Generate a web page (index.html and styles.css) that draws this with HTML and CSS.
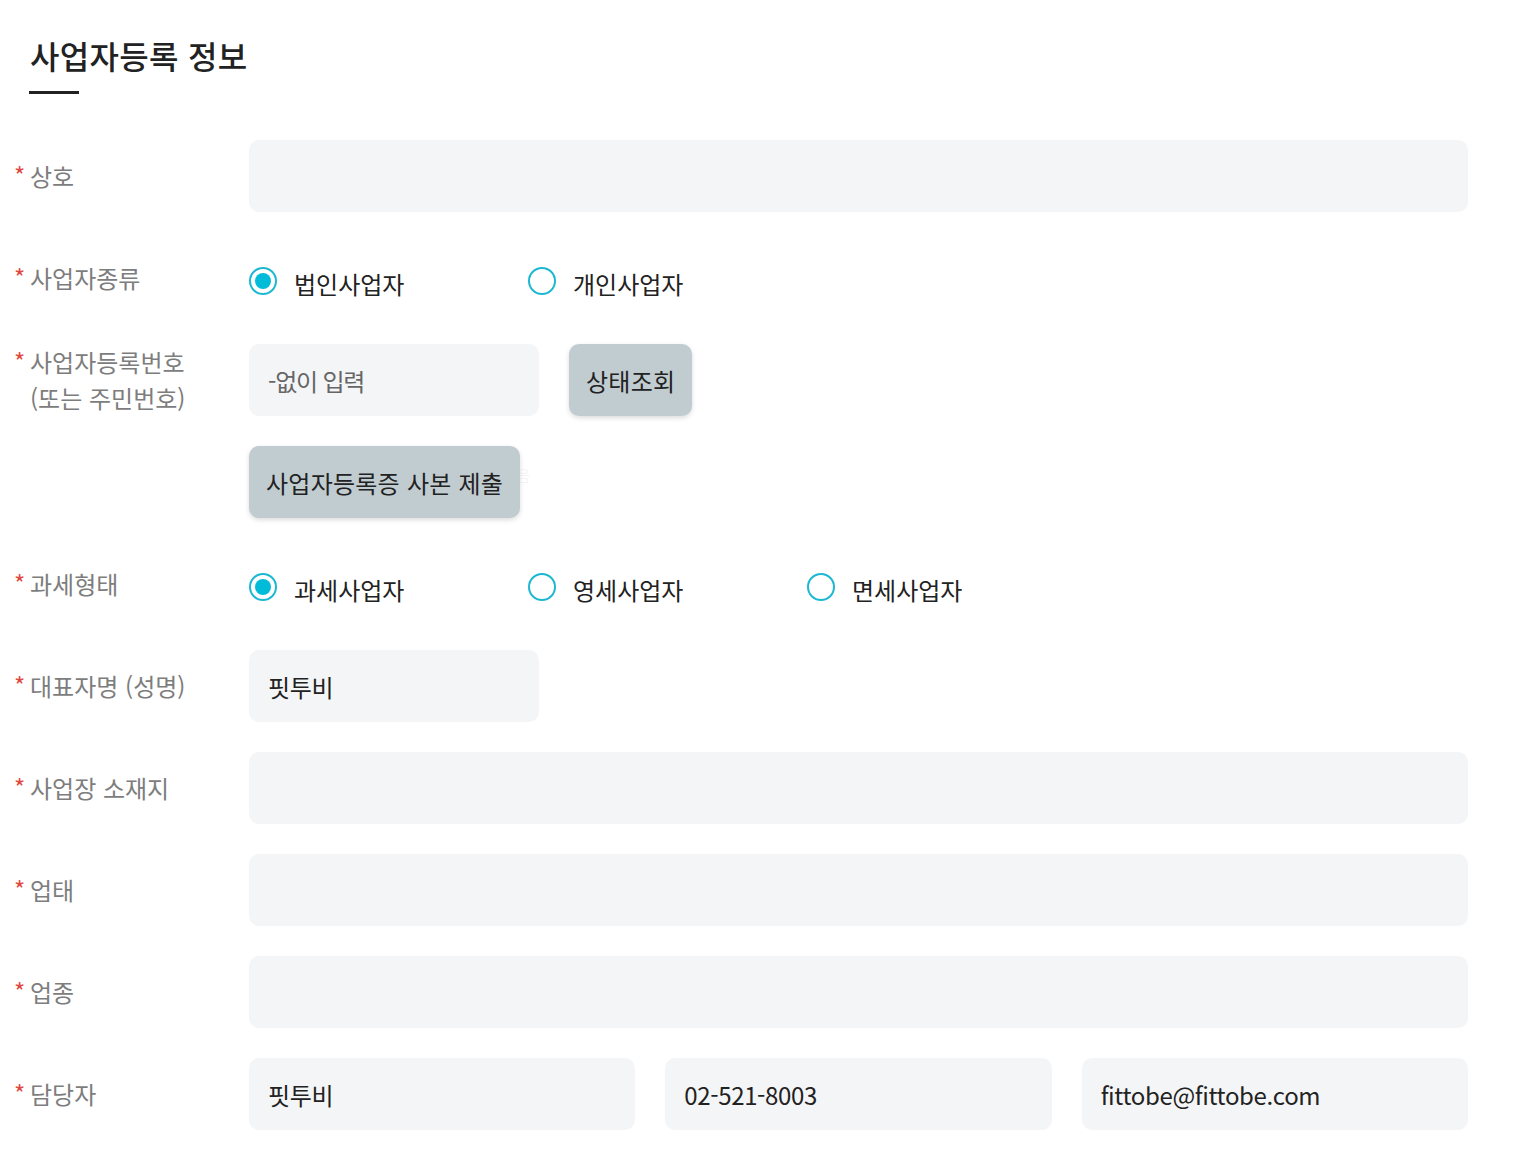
FILE: index.html
```html
<!DOCTYPE html>
<html lang="ko">
<head>
<meta charset="utf-8">
<title>사업자등록 정보</title>
<link rel="stylesheet" href="styles.css">
</head>
<body>
<div class="page">
  <div class="title-wrap">
    <h2 class="title">사업자등록 정보</h2>
    <div class="title-bar"></div>
  </div>

  <div class="form">
    <div class="row">
      <div class="label"><div class="label-inner"><span class="req">*</span><span class="label-text">상호</span></div></div>
      <div class="field"><div class="input full"></div></div>
    </div>

    <div class="row">
      <div class="label"><div class="label-inner"><span class="req">*</span><span class="label-text">사업자종류</span></div></div>
      <div class="field">
        <div class="radios">
          <label class="radio"><span class="dot checked"></span><span class="radio-text">법인사업자</span></label>
          <label class="radio"><span class="dot"></span><span class="radio-text">개인사업자</span></label>
        </div>
      </div>
    </div>

    <div class="row">
      <div class="label"><div class="label-inner"><span class="req">*</span><span class="label-text">사업자등록번호<br>(또는 주민번호)</span></div></div>
      <div class="field stack">
        <div class="inline">
          <div class="input short placeholder">-없이 입력</div>
          <button class="btn">상태조회</button>
        </div>
        <div class="file-wrap">
          <div class="file-ghost"><span class="ghost-btn">파일 선택</span><span class="ghost-text">선택된 파일 없음</span></div>
          <button class="btn">사업자등록증 사본 제출</button>
        </div>
      </div>
    </div>

    <div class="row">
      <div class="label"><div class="label-inner"><span class="req">*</span><span class="label-text">과세형태</span></div></div>
      <div class="field">
        <div class="radios">
          <label class="radio"><span class="dot checked"></span><span class="radio-text">과세사업자</span></label>
          <label class="radio"><span class="dot"></span><span class="radio-text">영세사업자</span></label>
          <label class="radio"><span class="dot"></span><span class="radio-text">면세사업자</span></label>
        </div>
      </div>
    </div>

    <div class="row">
      <div class="label"><div class="label-inner"><span class="req">*</span><span class="label-text">대표자명 (성명)</span></div></div>
      <div class="field"><div class="input short">핏투비</div></div>
    </div>

    <div class="row">
      <div class="label"><div class="label-inner"><span class="req">*</span><span class="label-text">사업장 소재지</span></div></div>
      <div class="field"><div class="input full"></div></div>
    </div>

    <div class="row">
      <div class="label"><div class="label-inner"><span class="req">*</span><span class="label-text">업태</span></div></div>
      <div class="field"><div class="input full"></div></div>
    </div>

    <div class="row">
      <div class="label"><div class="label-inner"><span class="req">*</span><span class="label-text">업종</span></div></div>
      <div class="field"><div class="input full"></div></div>
    </div>

    <div class="row">
      <div class="label"><div class="label-inner"><span class="req">*</span><span class="label-text">담당자</span></div></div>
      <div class="field">
        <div class="triple">
          <div class="input">핏투비</div>
          <div class="input">02-521-8003</div>
          <div class="input">fittobe@fittobe.com</div>
        </div>
      </div>
    </div>
  </div>
</div>
</body>
</html>
```

FILE: styles.css
```css
* { box-sizing: border-box; }

html, body {
  margin: 0;
  padding: 0;
  background: #ffffff;
}

body {
  font-family: "Noto Sans CJK KR", "Noto Sans", sans-serif;
  color: #222222;
}

.page {
  width: 1516px;
  padding: 32px 48px 30px 14px;
}

.title-wrap {
  padding-left: 15px;
}

.title {
  margin: 0;
  font-size: 32px;
  font-weight: 500;
  letter-spacing: 0.01em;
  line-height: 46px;
  color: #222222;
  padding-left: 1px;
}

.title-bar {
  width: 50px;
  height: 3px;
  background: #222222;
  margin-top: 13px;
}

.form {
  margin-top: 46px;
  display: flex;
  flex-direction: column;
  gap: 30px;
}

.row {
  display: flex;
  align-items: flex-start;
}

.label {
  width: 235px;
  flex: none;
  min-height: 72px;
  display: flex;
  align-items: center;
  font-size: 24px;
  line-height: 36px;
  color: #7d7d7d;
}

.label-inner {
  display: flex;
  align-items: flex-start;
}

.label .req {
  width: 16px;
  flex: none;
  color: #e0483f;
  font-size: 24px;
  line-height: 36px;
  position: relative;
  top: -1px;
}

.label-text {
  display: block;
}

.field {
  flex: 1;
  min-width: 0;
}

.input {
  height: 72px;
  background: #f4f5f7;
  border-radius: 10px;
  padding: 0 19px;
  display: flex;
  align-items: center;
  font-size: 24px;
  letter-spacing: -0.015em;
  color: #222222;
}

.input.full { width: 100%; }
.input.short { width: 290px; }
.input.placeholder { color: #666666; letter-spacing: -0.05em; }

.stack {
  display: flex;
  flex-direction: column;
  gap: 30px;
}

.inline {
  display: flex;
  gap: 30px;
}

.btn {
  position: relative;
  height: 72px;
  border: none;
  border-radius: 10px;
  background: #c1ccd1;
  box-shadow: 0 2px 5px rgba(0, 0, 0, 0.14);
  padding: 0 17px;
  font-family: inherit;
  font-size: 24px;
  letter-spacing: 0.01em;
  color: #222222;
  cursor: pointer;
}

.file-wrap {
  position: relative;
  align-self: flex-start;
}

.file-ghost {
  position: absolute;
  left: 31px;
  top: 0;
  height: 56px;
  display: flex;
  align-items: stretch;
  font-size: 24px;
  color: #000;
  opacity: 0.04;
  white-space: nowrap;
  pointer-events: none;
}

.ghost-btn {
  border: 1px solid #000;
  padding: 0 20px;
  display: flex;
  align-items: center;
  flex: none;
}

.ghost-text {
  padding-left: 8px;
  font-size: 15px;
  display: flex;
  align-items: center;
}

.radios {
  height: 72px;
  padding-top: 6px;
  display: flex;
  align-items: center;
}

.radio {
  width: 279px;
  display: flex;
  align-items: center;
  gap: 17px;
  font-size: 24px;
  letter-spacing: 0;
  color: #222222;
}

.radio:last-child { width: auto; }

.dot {
  width: 28px;
  height: 28px;
  border-radius: 50%;
  border: 2px solid #1cb8d2;
  background: #ffffff;
  flex: none;
  position: relative;
}

.dot.checked::after {
  content: "";
  position: absolute;
  left: 4px;
  top: 4px;
  width: 16px;
  height: 16px;
  border-radius: 50%;
  background: #00bcd8;
}

.radio-text {
  position: relative;
  top: 2px;
}

.triple {
  display: grid;
  grid-template-columns: repeat(3, 1fr);
  gap: 30px;
}
```
